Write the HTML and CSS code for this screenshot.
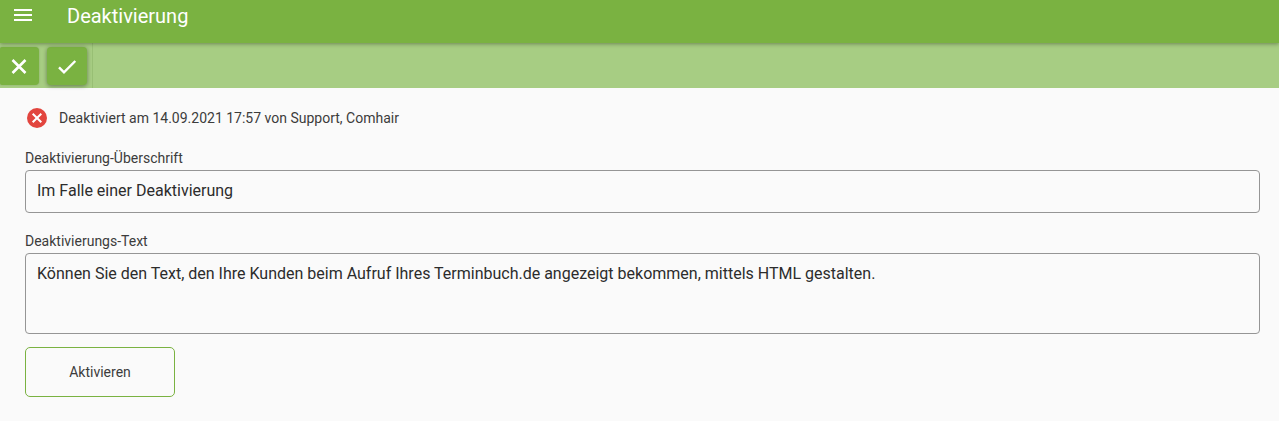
FILE: index.html
```html
<!DOCTYPE html>
<html lang="de">

<head>
    <meta charset="UTF-8">
    <meta name="viewport" content="width=device-width, initial-scale=1.0">
    <title>Deaktivierung</title>
    <link rel="stylesheet" href="styles.css">
</head>

<body>
    <header class="header">
        <button type="button" class="menu-btn" aria-label="Menü">
            <svg width="24" height="24" viewBox="0 0 24 24">
                <path d="M3 18h18v-2H3v2zm0-5h18v-2H3v2zm0-7v2h18V6H3z" />
            </svg>
        </button>
        <h1 class="title">Deaktivierung</h1>
    </header>

    <div class="toolbar">
        <div class="toolbar-group">
            <button type="button" class="tool-btn flat" aria-label="Abbrechen">
                <svg width="24" height="24" viewBox="0 0 24 24">
                    <path d="M5.5 6l13 13M18.5 6l-13 13" />
                </svg>
            </button>
            <button type="submit" form="form" class="tool-btn raised" aria-label="Speichern">
                <svg width="24" height="24" viewBox="0 0 24 24">
                    <path d="M4 13.3l5 5L20.3 7" />
                </svg>
            </button>
        </div>
    </div>

    <main class="content">
        <form id="form">
            <div class="status">
                <svg width="24" height="24" viewBox="0 0 24 24">
                    <circle cx="12" cy="12" r="10" />
                    <path d="M7.7 7.7l8.6 8.6M16.3 7.7l-8.6 8.6" />
                </svg>
                <span>Deaktiviert am 14.09.2021 17:57 von Support, Comhair</span>
            </div>

            <div class="field">
                <label for="headline">Deaktivierung-Überschrift</label>
                <input type="text" id="headline" value="Im Falle einer Deaktivierung">
            </div>

            <div class="field">
                <label for="text">Deaktivierungs-Text</label>
                <textarea id="text" rows="3">Können Sie den Text, den Ihre Kunden beim Aufruf Ihres Terminbuch.de angezeigt bekommen, mittels HTML gestalten.</textarea>
            </div>

            <button type="button" class="activate">Aktivieren</button>
        </form>
    </main>
</body>

</html>
```
FILE: styles.css
```css
* {
    box-sizing: border-box;
}

body {
    margin: 0;
    background-color: #fafafa;
    color: #3c3c3c;
    font-family: Roboto, sans-serif;
    font-size: 14px;
    line-height: 20px;
}

.header {
    position: relative;
    display: flex;
    align-items: flex-start;
    gap: 32px;
    padding: 3px 11px 14px;
    background-color: #7ab241;
    box-shadow: 0 1px 4px rgba(0, 0, 0, 0.35);
}

.menu-btn {
    display: flex;
    padding: 0;
    border: none;
    background: none;
    fill: white;
}

.title {
    margin: 0;
    color: white;
    font-size: 20px;
    font-weight: 400;
    line-height: 26px;
}

.toolbar {
    display: flex;
    background-color: #a7cd83;
}

.toolbar-group {
    display: flex;
    align-items: flex-start;
    gap: 8px;
    padding: 4px 5px 3px 0;
    border-right: 1px solid #98bf74;
}

.tool-btn {
    display: flex;
    align-items: center;
    justify-content: center;
    height: 38px;
    padding: 0 8px;
    border: none;
    border-radius: 4px;
    background-color: #7ab241;
    fill: none;
    stroke: white;
    stroke-width: 2.6;
}

.flat {
    padding-left: 7px;
    border-radius: 2px 4px 4px 2px;
    box-shadow: 0 0 2px rgba(0, 0, 0, 0.2);
}

.raised {
    stroke-width: 2.4;
    box-shadow: 0 1px 4px rgba(0, 0, 0, 0.4);
}

.content {
    padding: 18px 19px 24px 25px;
}

.status {
    display: flex;
    align-items: center;
    gap: 10px;
    margin-bottom: 18px;
}

.status circle {
    fill: #e2453e;
}

.status path {
    stroke: white;
    stroke-width: 2;
}

.field {
    display: flex;
    flex-direction: column;
    gap: 2px;
    margin-bottom: 18px;
}

.field input,
.field textarea {
    width: 100%;
    padding: 10px 11px;
    border: 1px solid #959595;
    border-radius: 4px;
    background-color: transparent;
    color: #2c2c2c;
    font-family: inherit;
    font-size: 16px;
    line-height: 20px;
    resize: none;
}

.field input {
    height: 43px;
    padding-bottom: 12px;
}

.field textarea {
    height: 81px;
}

.activate {
    display: block;
    width: 150px;
    height: 50px;
    margin-top: -5px;
    border: 1px solid #7ab241;
    border-radius: 5px;
    background-color: transparent;
    color: #3c3c3c;
    font-family: inherit;
    font-size: 14px;
}
```
